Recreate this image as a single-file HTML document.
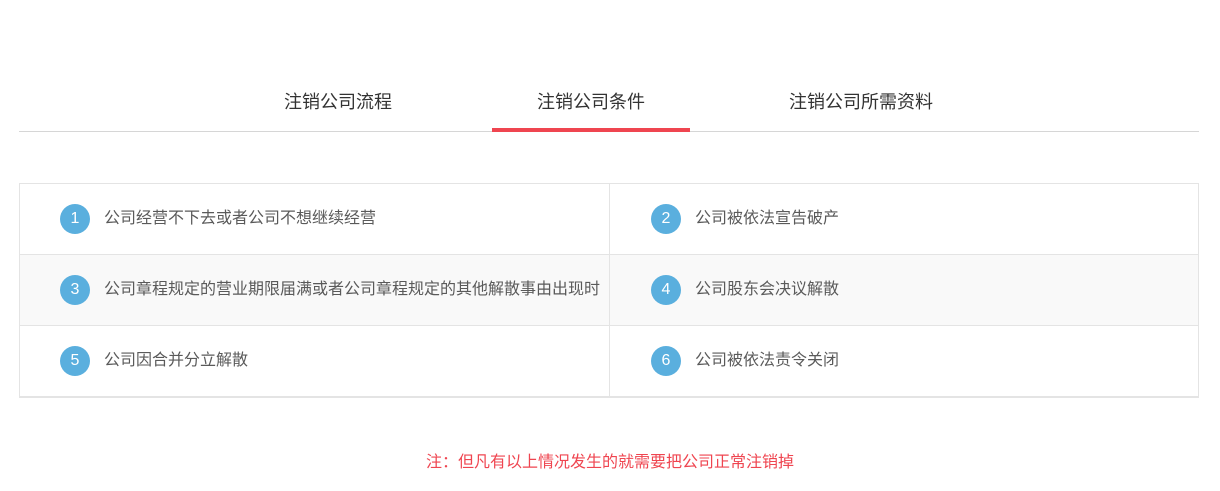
<!DOCTYPE html>
<html><head><meta charset="utf-8"><style>
*{margin:0;padding:0;box-sizing:border-box}
body{width:1220px;height:491px;background:#fff;font-family:"Liberation Sans","Noto Sans CJK SC",sans-serif;position:relative;overflow:hidden}
.tabline{position:absolute;left:19px;top:131px;width:1180px;height:1px;background:#d6d6d6}
.tab{position:absolute;top:90px;font-size:18px;color:#333;line-height:24px;transform:translateX(-50%);white-space:nowrap}
.red{position:absolute;left:492px;top:128px;width:198px;height:4px;background:#ef4550}
table{position:absolute;left:19px;top:183px;width:1180px;border-collapse:collapse}
td{height:71px;border:1px solid #e4e4e4;width:590px;font-size:16px;color:#5a5a5a;padding-left:40px;white-space:nowrap}
td+td{padding-left:41px}
tr.g td{background:#f9f9f9}
tr:last-child td{border-bottom:2px solid #e4e4e4}
.n{display:inline-block;width:30px;height:30px;border-radius:50%;background:#5aafde;color:#fff;text-align:center;line-height:30px;font-size:16px;margin-right:14px;vertical-align:middle}
.note{position:absolute;top:448px;left:0;width:1220px;text-align:center;font-size:16px;color:#ef4550}
</style></head><body>
<div class="tab" style="left:338px">注销公司流程</div>
<div class="tab" style="left:591px">注销公司条件</div>
<div class="tab" style="left:861px">注销公司所需资料</div>
<div class="tabline"></div><div class="red"></div>
<table>
<tr><td><span class="n">1</span>公司经营不下去或者公司不想继续经营</td><td><span class="n">2</span>公司被依法宣告破产</td></tr>
<tr class="g"><td><span class="n">3</span>公司章程规定的营业期限届满或者公司章程规定的其他解散事由出现时</td><td><span class="n">4</span>公司股东会决议解散</td></tr>
<tr><td><span class="n">5</span>公司因合并分立解散</td><td><span class="n">6</span>公司被依法责令关闭</td></tr>
</table>
<div class="note">注：但凡有以上情况发生的就需要把公司正常注销掉</div>
</body></html>
